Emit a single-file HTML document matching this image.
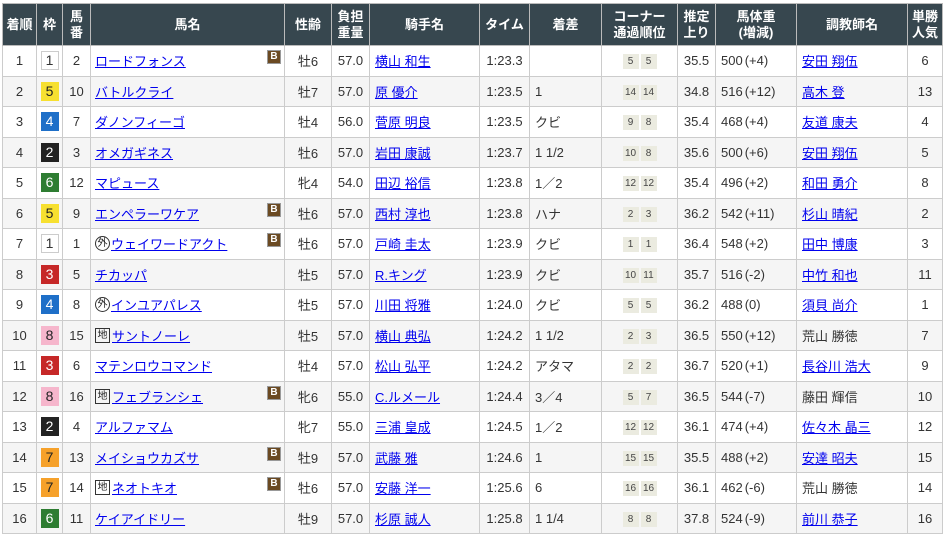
<!DOCTYPE html>
<html><head><meta charset="utf-8">
<style>
html,body{margin:0;padding:0;background:#fff;width:945px;height:536px;overflow:hidden}
body{font-family:"Liberation Sans","Noto Sans CJK JP",sans-serif;font-size:13px;color:#333}
table{position:absolute;left:2px;top:3px;border-collapse:collapse;table-layout:fixed;width:940px}
th,td{border:1px solid #ccc;padding:0;overflow:hidden;white-space:nowrap}
th{background:#37474f;color:#fff;font-weight:bold;font-size:13px;line-height:16px;height:41px;border-color:#bbb}
td{height:29.5px;text-align:center}
tbody tr:nth-child(even) td{background:#f5f5f5}
a{color:#0000ee;text-decoration:underline}
.l{text-align:left;padding-left:5px}
.nm{position:relative;text-align:left;padding-left:4px}
.b{position:absolute;right:3px;top:4px;width:12px;height:12px;background:#6b4a22;border:1px solid #999;color:#fff;font-size:10px;font-weight:bold;line-height:12px;text-align:center}
.w{display:inline-block;width:18px;height:19px;line-height:19px;font-size:14px;text-align:center}
.f1{background:#fff;border:1px solid #ccc;width:16px;height:17px;line-height:17px}
.f2{background:#222;color:#fff}.f3{background:#c62828;color:#fff}.f4{background:#1e6fc8;color:#fff}
.f5{background:#f7e030;color:#222}.f6{background:#2e7d32;color:#fff}.f7{background:#f6a12a;color:#222}.f8{background:#f6b6cc;color:#222}
.c{display:inline-block;width:16px;height:15px;line-height:15px;background:#ebebe0;font-size:10px;margin:0 1px;color:#444}
.gai{display:inline-block;width:13px;height:13px;border:1px solid #333;border-radius:50%;font-size:10px;line-height:13px;text-align:center;color:#222;margin-right:1px;vertical-align:middle;position:relative;top:-2px}
.chi{display:inline-block;width:13px;height:13px;border:1px solid #333;font-size:10px;line-height:13px;text-align:center;color:#222;margin-right:2px;vertical-align:middle;position:relative;top:-2px}
.wt{text-align:left;padding-left:5px}
.wt i{font-style:normal;margin-left:2px}
</style></head><body>
<table>
<colgroup><col style="width:34px"><col style="width:26px"><col style="width:28px"><col style="width:194px"><col style="width:47px"><col style="width:38px"><col style="width:110px"><col style="width:50px"><col style="width:72px"><col style="width:76px"><col style="width:38px"><col style="width:81px"><col style="width:111px"><col style="width:35px"></colgroup>
<thead><tr><th>着順</th><th>枠</th><th>馬<br>番</th><th>馬名</th><th>性齢</th><th>負担<br>重量</th><th>騎手名</th><th>タイム</th><th>着差</th><th>コーナー<br>通過順位</th><th>推定<br>上り</th><th>馬体重<br>(増減)</th><th>調教師名</th><th>単勝<br>人気</th></tr></thead>
<tbody>
<tr><td>1</td><td><span class="w f1">1</span></td><td>2</td><td class="nm"><a>ロードフォンス</a><span class="b">B</span></td><td>牡6</td><td>57.0</td><td class="l"><a>横山 和生</a></td><td>1:23.3</td><td class="l"></td><td><span class="c">5</span><span class="c">5</span></td><td>35.5</td><td class="wt">500<i>(+4)</i></td><td class="l"><a>安田 翔伍</a></td><td>6</td></tr>
<tr><td>2</td><td><span class="w f5">5</span></td><td>10</td><td class="nm"><a>バトルクライ</a></td><td>牡7</td><td>57.0</td><td class="l"><a>原 優介</a></td><td>1:23.5</td><td class="l">1</td><td><span class="c">14</span><span class="c">14</span></td><td>34.8</td><td class="wt">516<i>(+12)</i></td><td class="l"><a>高木 登</a></td><td>13</td></tr>
<tr><td>3</td><td><span class="w f4">4</span></td><td>7</td><td class="nm"><a>ダノンフィーゴ</a></td><td>牡4</td><td>56.0</td><td class="l"><a>菅原 明良</a></td><td>1:23.5</td><td class="l">クビ</td><td><span class="c">9</span><span class="c">8</span></td><td>35.4</td><td class="wt">468<i>(+4)</i></td><td class="l"><a>友道 康夫</a></td><td>4</td></tr>
<tr><td>4</td><td><span class="w f2">2</span></td><td>3</td><td class="nm"><a>オメガギネス</a></td><td>牡6</td><td>57.0</td><td class="l"><a>岩田 康誠</a></td><td>1:23.7</td><td class="l">1 1/2</td><td><span class="c">10</span><span class="c">8</span></td><td>35.6</td><td class="wt">500<i>(+6)</i></td><td class="l"><a>安田 翔伍</a></td><td>5</td></tr>
<tr><td>5</td><td><span class="w f6">6</span></td><td>12</td><td class="nm"><a>マピュース</a></td><td>牝4</td><td>54.0</td><td class="l"><a>田辺 裕信</a></td><td>1:23.8</td><td class="l">1／2</td><td><span class="c">12</span><span class="c">12</span></td><td>35.4</td><td class="wt">496<i>(+2)</i></td><td class="l"><a>和田 勇介</a></td><td>8</td></tr>
<tr><td>6</td><td><span class="w f5">5</span></td><td>9</td><td class="nm"><a>エンペラーワケア</a><span class="b">B</span></td><td>牡6</td><td>57.0</td><td class="l"><a>西村 淳也</a></td><td>1:23.8</td><td class="l">ハナ</td><td><span class="c">2</span><span class="c">3</span></td><td>36.2</td><td class="wt">542<i>(+11)</i></td><td class="l"><a>杉山 晴紀</a></td><td>2</td></tr>
<tr><td>7</td><td><span class="w f1">1</span></td><td>1</td><td class="nm"><span class="gai">外</span><a>ウェイワードアクト</a><span class="b">B</span></td><td>牡6</td><td>57.0</td><td class="l"><a>戸崎 圭太</a></td><td>1:23.9</td><td class="l">クビ</td><td><span class="c">1</span><span class="c">1</span></td><td>36.4</td><td class="wt">548<i>(+2)</i></td><td class="l"><a>田中 博康</a></td><td>3</td></tr>
<tr><td>8</td><td><span class="w f3">3</span></td><td>5</td><td class="nm"><a>チカッパ</a></td><td>牡5</td><td>57.0</td><td class="l"><a>R.キング</a></td><td>1:23.9</td><td class="l">クビ</td><td><span class="c">10</span><span class="c">11</span></td><td>35.7</td><td class="wt">516<i>(-2)</i></td><td class="l"><a>中竹 和也</a></td><td>11</td></tr>
<tr><td>9</td><td><span class="w f4">4</span></td><td>8</td><td class="nm"><span class="gai">外</span><a>インユアパレス</a></td><td>牡5</td><td>57.0</td><td class="l"><a>川田 将雅</a></td><td>1:24.0</td><td class="l">クビ</td><td><span class="c">5</span><span class="c">5</span></td><td>36.2</td><td class="wt">488<i>(0)</i></td><td class="l"><a>須貝 尚介</a></td><td>1</td></tr>
<tr><td>10</td><td><span class="w f8">8</span></td><td>15</td><td class="nm"><span class="chi">地</span><a>サントノーレ</a></td><td>牡5</td><td>57.0</td><td class="l"><a>横山 典弘</a></td><td>1:24.2</td><td class="l">1 1/2</td><td><span class="c">2</span><span class="c">3</span></td><td>36.5</td><td class="wt">550<i>(+12)</i></td><td class="l">荒山 勝徳</td><td>7</td></tr>
<tr><td>11</td><td><span class="w f3">3</span></td><td>6</td><td class="nm"><a>マテンロウコマンド</a></td><td>牡4</td><td>57.0</td><td class="l"><a>松山 弘平</a></td><td>1:24.2</td><td class="l">アタマ</td><td><span class="c">2</span><span class="c">2</span></td><td>36.7</td><td class="wt">520<i>(+1)</i></td><td class="l"><a>長谷川 浩大</a></td><td>9</td></tr>
<tr><td>12</td><td><span class="w f8">8</span></td><td>16</td><td class="nm"><span class="chi">地</span><a>フェブランシェ</a><span class="b">B</span></td><td>牝6</td><td>55.0</td><td class="l"><a>C.ルメール</a></td><td>1:24.4</td><td class="l">3／4</td><td><span class="c">5</span><span class="c">7</span></td><td>36.5</td><td class="wt">544<i>(-7)</i></td><td class="l">藤田 輝信</td><td>10</td></tr>
<tr><td>13</td><td><span class="w f2">2</span></td><td>4</td><td class="nm"><a>アルファマム</a></td><td>牝7</td><td>55.0</td><td class="l"><a>三浦 皇成</a></td><td>1:24.5</td><td class="l">1／2</td><td><span class="c">12</span><span class="c">12</span></td><td>36.1</td><td class="wt">474<i>(+4)</i></td><td class="l"><a>佐々木 晶三</a></td><td>12</td></tr>
<tr><td>14</td><td><span class="w f7">7</span></td><td>13</td><td class="nm"><a>メイショウカズサ</a><span class="b">B</span></td><td>牡9</td><td>57.0</td><td class="l"><a>武藤 雅</a></td><td>1:24.6</td><td class="l">1</td><td><span class="c">15</span><span class="c">15</span></td><td>35.5</td><td class="wt">488<i>(+2)</i></td><td class="l"><a>安達 昭夫</a></td><td>15</td></tr>
<tr><td>15</td><td><span class="w f7">7</span></td><td>14</td><td class="nm"><span class="chi">地</span><a>ネオトキオ</a><span class="b">B</span></td><td>牡6</td><td>57.0</td><td class="l"><a>安藤 洋一</a></td><td>1:25.6</td><td class="l">6</td><td><span class="c">16</span><span class="c">16</span></td><td>36.1</td><td class="wt">462<i>(-6)</i></td><td class="l">荒山 勝徳</td><td>14</td></tr>
<tr><td>16</td><td><span class="w f6">6</span></td><td>11</td><td class="nm"><a>ケイアイドリー</a></td><td>牡9</td><td>57.0</td><td class="l"><a>杉原 誠人</a></td><td>1:25.8</td><td class="l">1 1/4</td><td><span class="c">8</span><span class="c">8</span></td><td>37.8</td><td class="wt">524<i>(-9)</i></td><td class="l"><a>前川 恭子</a></td><td>16</td></tr>
</tbody></table>
</body></html>
